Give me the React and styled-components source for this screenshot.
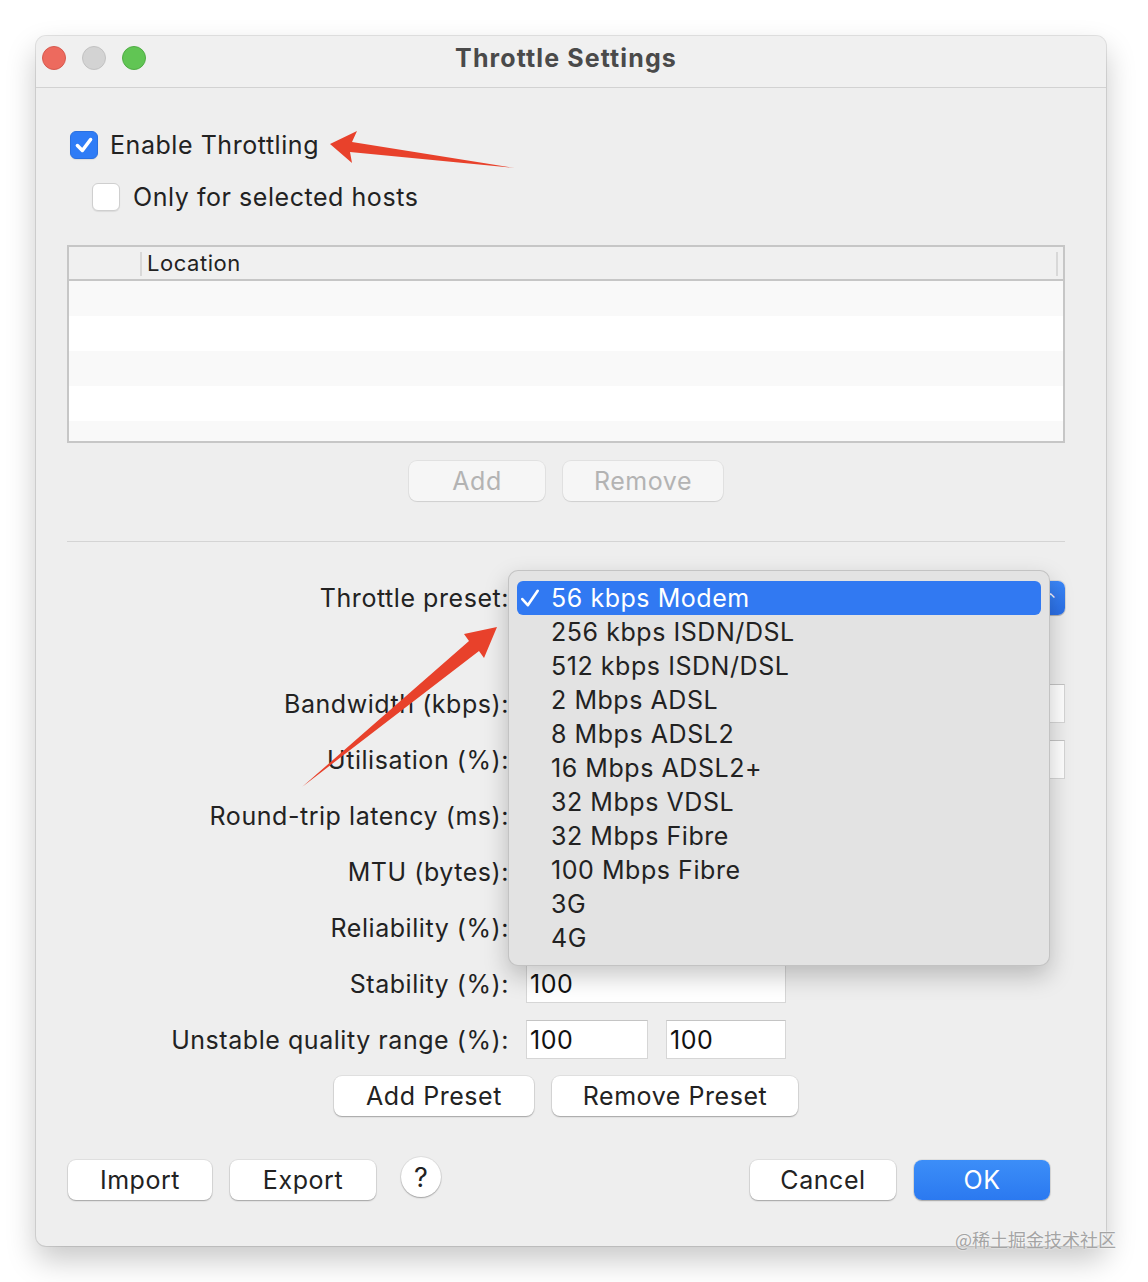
import React from 'react';
import styled, { createGlobalStyle } from 'styled-components';

const GlobalStyle = createGlobalStyle`
  html, body {
    margin: 0;
    padding: 0;
    background: #ffffff;
  }
  body {
    font-family: Inter, "Liberation Sans", sans-serif;
    color: #222;
    letter-spacing: 0.55px;
  }
`;

const presets = [
  '56 kbps Modem',
  '256 kbps ISDN/DSL',
  '512 kbps ISDN/DSL',
  '2 Mbps ADSL',
  '8 Mbps ADSL2',
  '16 Mbps ADSL2+',
  '32 Mbps VDSL',
  '32 Mbps Fibre',
  '100 Mbps Fibre',
  '3G',
  '4G',
];

const Page = styled.div`
  position: relative;
  width: 1148px;
  height: 1282px;
  padding: 36px 0 0 36px;
  box-sizing: border-box;
  overflow: hidden;
`;

const Window = styled.div`
  width: 1070px;
  height: 1210px;
  background: #eeeeee;
  border-radius: 10px;
  box-shadow: 0 0 0 1px rgba(0, 0, 0, 0.1), 0 14px 30px rgba(0, 0, 0, 0.22);
  display: flex;
  flex-direction: column;
`;

const TitleBar = styled.div`
  height: 52px;
  flex: none;
  box-sizing: border-box;
  padding-bottom: 8px;
  display: grid;
  grid-template-columns: 1fr auto 1fr;
  align-items: center;
  background: #f0f0f0;
  border-bottom: 1px solid #d2d2d2;
  border-radius: 10px 10px 0 0;
`;

const Lights = styled.div`
  display: flex;
  gap: 16px;
  padding-left: 6px;
`;

const Light = styled.span`
  width: 24px;
  height: 24px;
  border-radius: 50%;
  box-sizing: border-box;
  background: ${(p) => p.$color};
  border: 1px solid ${(p) => p.$edge};
`;

const Title = styled.div`
  font-size: 25px;
  font-weight: 700;
  letter-spacing: 1.1px;
  color: #4a4a4a;
  margin-left: -10px;
`;

const Body = styled.div`
  flex: 1;
  display: flex;
  flex-direction: column;
  padding: 43px 41px 0 31px;
`;

const CheckRow = styled.label`
  display: flex;
  align-items: center;
  gap: ${(p) => p.$gap}px;
  margin-left: ${(p) => p.$indent}px;
  margin-top: ${(p) => p.$top || 0}px;
  font-size: 25px;
  color: #222;
  line-height: 28px;
`;

const Box = styled.span`
  width: 28px;
  height: 28px;
  flex: none;
  box-sizing: border-box;
  border-radius: 6px;
  display: flex;
  align-items: center;
  justify-content: center;
  background: ${(p) => (p.$checked ? '#2f7cf6' : '#ffffff')};
  border: 1px solid ${(p) => (p.$checked ? '#2a70e0' : '#cfcfcf')};
  box-shadow: 0 1px 1px rgba(0, 0, 0, 0.08);
`;

const Table = styled.div`
  margin-top: 34px;
  height: 198px;
  box-sizing: border-box;
  border: 2px solid #c6c6c6;
  display: flex;
  flex-direction: column;
  background: #fff;
`;

const TableHead = styled.div`
  height: 32px;
  flex: none;
  display: flex;
  align-items: center;
  background: #f0f0f0;
  border-bottom: 2px solid #c6c6c6;
`;

const HeadCell = styled.div`
  height: 100%;
  display: flex;
  align-items: center;
  flex: ${(p) => (p.$grow ? 1 : 'none')};
  width: ${(p) => (p.$width ? `${p.$width}px` : 'auto')};
  box-sizing: border-box;
  padding-left: 7px;
  font-size: 22px;
  color: #222;
  position: relative;

  &::before {
    content: '';
    display: ${(p) => (p.$divider ? 'block' : 'none')};
    position: absolute;
    left: 0;
    top: 5px;
    bottom: 3px;
    width: 2px;
    background: #d8d8d8;
  }
`;

const TableRows = styled.div`
  flex: 1;
  background: repeating-linear-gradient(
    to bottom,
    #f9f9f9 0,
    #f9f9f9 35px,
    #ffffff 35px,
    #ffffff 70px
  );
`;

const Buttons = styled.div`
  display: flex;
  justify-content: center;
  gap: 18px;
  margin-top: ${(p) => p.$top}px;
`;

const Button = styled.button`
  width: ${(p) => p.$w}px;
  height: 40px;
  padding: 0;
  border: none;
  border-radius: 8px;
  font-family: inherit;
  font-size: 25px;
  letter-spacing: 0.55px;
  color: ${(p) => (p.disabled ? '#b3b3b3' : p.$primary ? '#ffffff' : '#222')};
  background: ${(p) =>
    p.disabled
      ? '#f6f6f6'
      : p.$primary
      ? 'linear-gradient(to bottom, #3c8ef8, #2b79f0)'
      : '#ffffff'};
  box-shadow: ${(p) =>
    p.disabled
      ? '0 0 0 1px rgba(0,0,0,0.05), 0 1px 1px rgba(0,0,0,0.08)'
      : '0 0 0 1px rgba(0,0,0,0.06), 0 1px 1.5px rgba(0,0,0,0.28)'};
`;

const HelpButton = styled.button`
  width: 40px;
  height: 40px;
  margin-left: 25px;
  margin-top: -6px;
  padding: 0;
  border: none;
  border-radius: 50%;
  background: #ffffff;
  font-family: inherit;
  font-size: 27px;
  color: #222;
  box-shadow: 0 0 0 1px rgba(0, 0, 0, 0.06), 0 1px 1.5px rgba(0, 0, 0, 0.28);
`;

const Separator = styled.div`
  margin-top: 40px;
  height: 1px;
  background: #d4d4d4;
`;

const FormRow = styled.div`
  display: grid;
  grid-template-columns: 442px 1fr;
  column-gap: 17px;
  align-items: center;
  margin-top: ${(p) => p.$top}px;
`;

const Label = styled.div`
  text-align: right;
  font-size: 25px;
  color: #222;
  white-space: nowrap;
`;

const Fields = styled.div`
  display: flex;
  gap: 18px;
  position: relative;
`;

const Input = styled.div`
  width: ${(p) => (p.$w ? `${p.$w}px` : '100%')};
  height: 39px;
  box-sizing: border-box;
  padding-left: 3px;
  display: flex;
  align-items: center;
  background: #ffffff;
  border: 1px solid #d6d6d6;
  border-top-color: #c4c4c4;
  font-size: 25px;
  color: #111;
`;

const PopupButton = styled.div`
  width: 100%;
  height: 34px;
  display: flex;
  border-radius: 7px;
  overflow: hidden;
  background: #ffffff;
  box-shadow: 0 0 0 1px rgba(0, 0, 0, 0.08), 0 1px 1px rgba(0, 0, 0, 0.2);
`;

const PopupValue = styled.div`
  flex: 1;
`;

const PopupArrow = styled.div`
  width: 20px;
  background: linear-gradient(to bottom, #3a86f7, #2b6fe6);
  color: #fff;
  font-size: 14px;
  display: flex;
  align-items: center;
  padding-left: 2px;
`;

const Menu = styled.ul`
  position: absolute;
  left: -18px;
  top: -11px;
  width: 542px;
  margin: 0;
  padding: 10px 8px;
  box-sizing: border-box;
  list-style: none;
  background: #e3e3e3;
  border: 1px solid rgba(0, 0, 0, 0.14);
  border-radius: 10px;
  box-shadow: 0 10px 24px rgba(0, 0, 0, 0.22);
  z-index: 5;
`;

const MenuItem = styled.li`
  height: 34px;
  display: flex;
  align-items: center;
  position: relative;
  padding-left: 34px;
  border-radius: 6px;
  font-size: 25px;
  color: ${(p) => (p.$active ? '#ffffff' : '#222')};
  background: ${(p) => (p.$active ? '#3179f2' : 'transparent')};
`;

const Tick = styled.svg`
  position: absolute;
  left: 2px;
  top: 6px;
`;

const Footer = styled.div`
  margin-top: 44px;
  display: flex;
  align-items: center;
  padding-left: 1px;
  padding-right: 15px;
`;

const Group = styled.div`
  display: flex;
  align-items: center;
  gap: 18px;
`;

const Spacer = styled.div`
  flex: 1;
`;

const Overlay = styled.svg`
  position: absolute;
  left: 0;
  top: 0;
  pointer-events: none;
  z-index: 10;
`;

const Watermark = styled.div`
  position: absolute;
  left: 955px;
  top: 1226px;
  font-family: "Noto Sans CJK SC", sans-serif;
  font-size: 18px;
  letter-spacing: 0;
  color: #a4a4a4;
  text-shadow: 0 0 2px #ffffff;
  z-index: 11;
`;

const CheckMark = ({ size = 20, color = '#fff', width = 3 }) => (
  <svg width={size} height={size} viewBox="0 0 20 20">
    <polyline
      points="4,10.5 8.5,15 16,5"
      fill="none"
      stroke={color}
      strokeWidth={width}
      strokeLinecap="round"
      strokeLinejoin="round"
    />
  </svg>
);

const Field = ({ label, top, children }) => (
  <FormRow $top={top}>
    <Label>{label}</Label>
    <Fields>{children}</Fields>
  </FormRow>
);

export default function App() {
  return (
    <Page>
      <GlobalStyle />
      <Window>
        <TitleBar>
          <Lights>
            <Light $color="#ed6a5e" $edge="#d65a4f" />
            <Light $color="#d3d3d3" $edge="#c2c2c2" />
            <Light $color="#61c554" $edge="#50ad45" />
          </Lights>
          <Title>Throttle Settings</Title>
          <div />
        </TitleBar>

        <Body>
          <CheckRow $indent={3} $gap={12}>
            <Box $checked>
              <CheckMark size={22} width={3.2} />
            </Box>
            Enable Throttling
          </CheckRow>
          <CheckRow $indent={25} $gap={13} $top={24}>
            <Box />
            Only for selected hosts
          </CheckRow>

          <Table>
            <TableHead>
              <HeadCell $width={71} />
              <HeadCell $grow $divider>
                Location
              </HeadCell>
              <HeadCell $width={2} $divider />
            </TableHead>
            <TableRows />
          </Table>

          <Buttons $top={18}>
            <Button $w={136} disabled>
              Add
            </Button>
            <Button $w={160} disabled>
              Remove
            </Button>
          </Buttons>

          <Separator />

          <Field label="Throttle preset:" top={39}>
            <PopupButton>
              <PopupValue />
              <PopupArrow>⌃</PopupArrow>
            </PopupButton>
            <Menu>
              {presets.map((name, i) => (
                <MenuItem key={name} $active={i === 0}>
                  {i === 0 && (
                    <Tick width="22" height="22" viewBox="0 0 20 20">
                      <polyline
                        points="3,11 8,16.5 17,3.5"
                        fill="none"
                        stroke="#fff"
                        strokeWidth="2.4"
                        strokeLinecap="round"
                        strokeLinejoin="round"
                      />
                    </Tick>
                  )}
                  {name}
                </MenuItem>
              ))}
            </Menu>
          </Field>
          <Field label="Bandwidth (kbps):" top={69}>
            <Input />
          </Field>
          <Field label="Utilisation (%):" top={17}>
            <Input />
          </Field>
          <Field label="Round-trip latency (ms):" top={17}>
            <Input $w={260} />
          </Field>
          <Field label="MTU (bytes):" top={17}>
            <Input $w={260} />
          </Field>
          <Field label="Reliability (%):" top={17}>
            <Input $w={260} />
          </Field>
          <Field label="Stability (%):" top={17}>
            <Input $w={260}>100</Input>
          </Field>
          <Field label="Unstable quality range (%):" top={17}>
            <Input $w={122}>100</Input>
            <Input $w={120}>100</Input>
          </Field>

          <Buttons $top={17}>
            <Button $w={200}>Add Preset</Button>
            <Button $w={246}>Remove Preset</Button>
          </Buttons>

          <Footer>
            <Group>
              <Button $w={144}>Import</Button>
              <Button $w={146}>Export</Button>
            </Group>
            <HelpButton>?</HelpButton>
            <Spacer />
            <Group>
              <Button $w={146}>Cancel</Button>
              <Button $w={136} $primary>
                OK
              </Button>
            </Group>
          </Footer>
        </Body>
      </Window>

      <Overlay width="1148" height="1282" viewBox="0 0 1148 1282">
        <path d="M330,144 L357,131 L352,142 L515,168 L350,152 L352,163 Z" fill="#e8412b" />
        <path d="M497,627 L464,634 L469,641 L302,787 L479,651 L484,658 Z" fill="#e8412b" />
      </Overlay>
      <Watermark>@稀土掘金技术社区</Watermark>
    </Page>
  );
}
